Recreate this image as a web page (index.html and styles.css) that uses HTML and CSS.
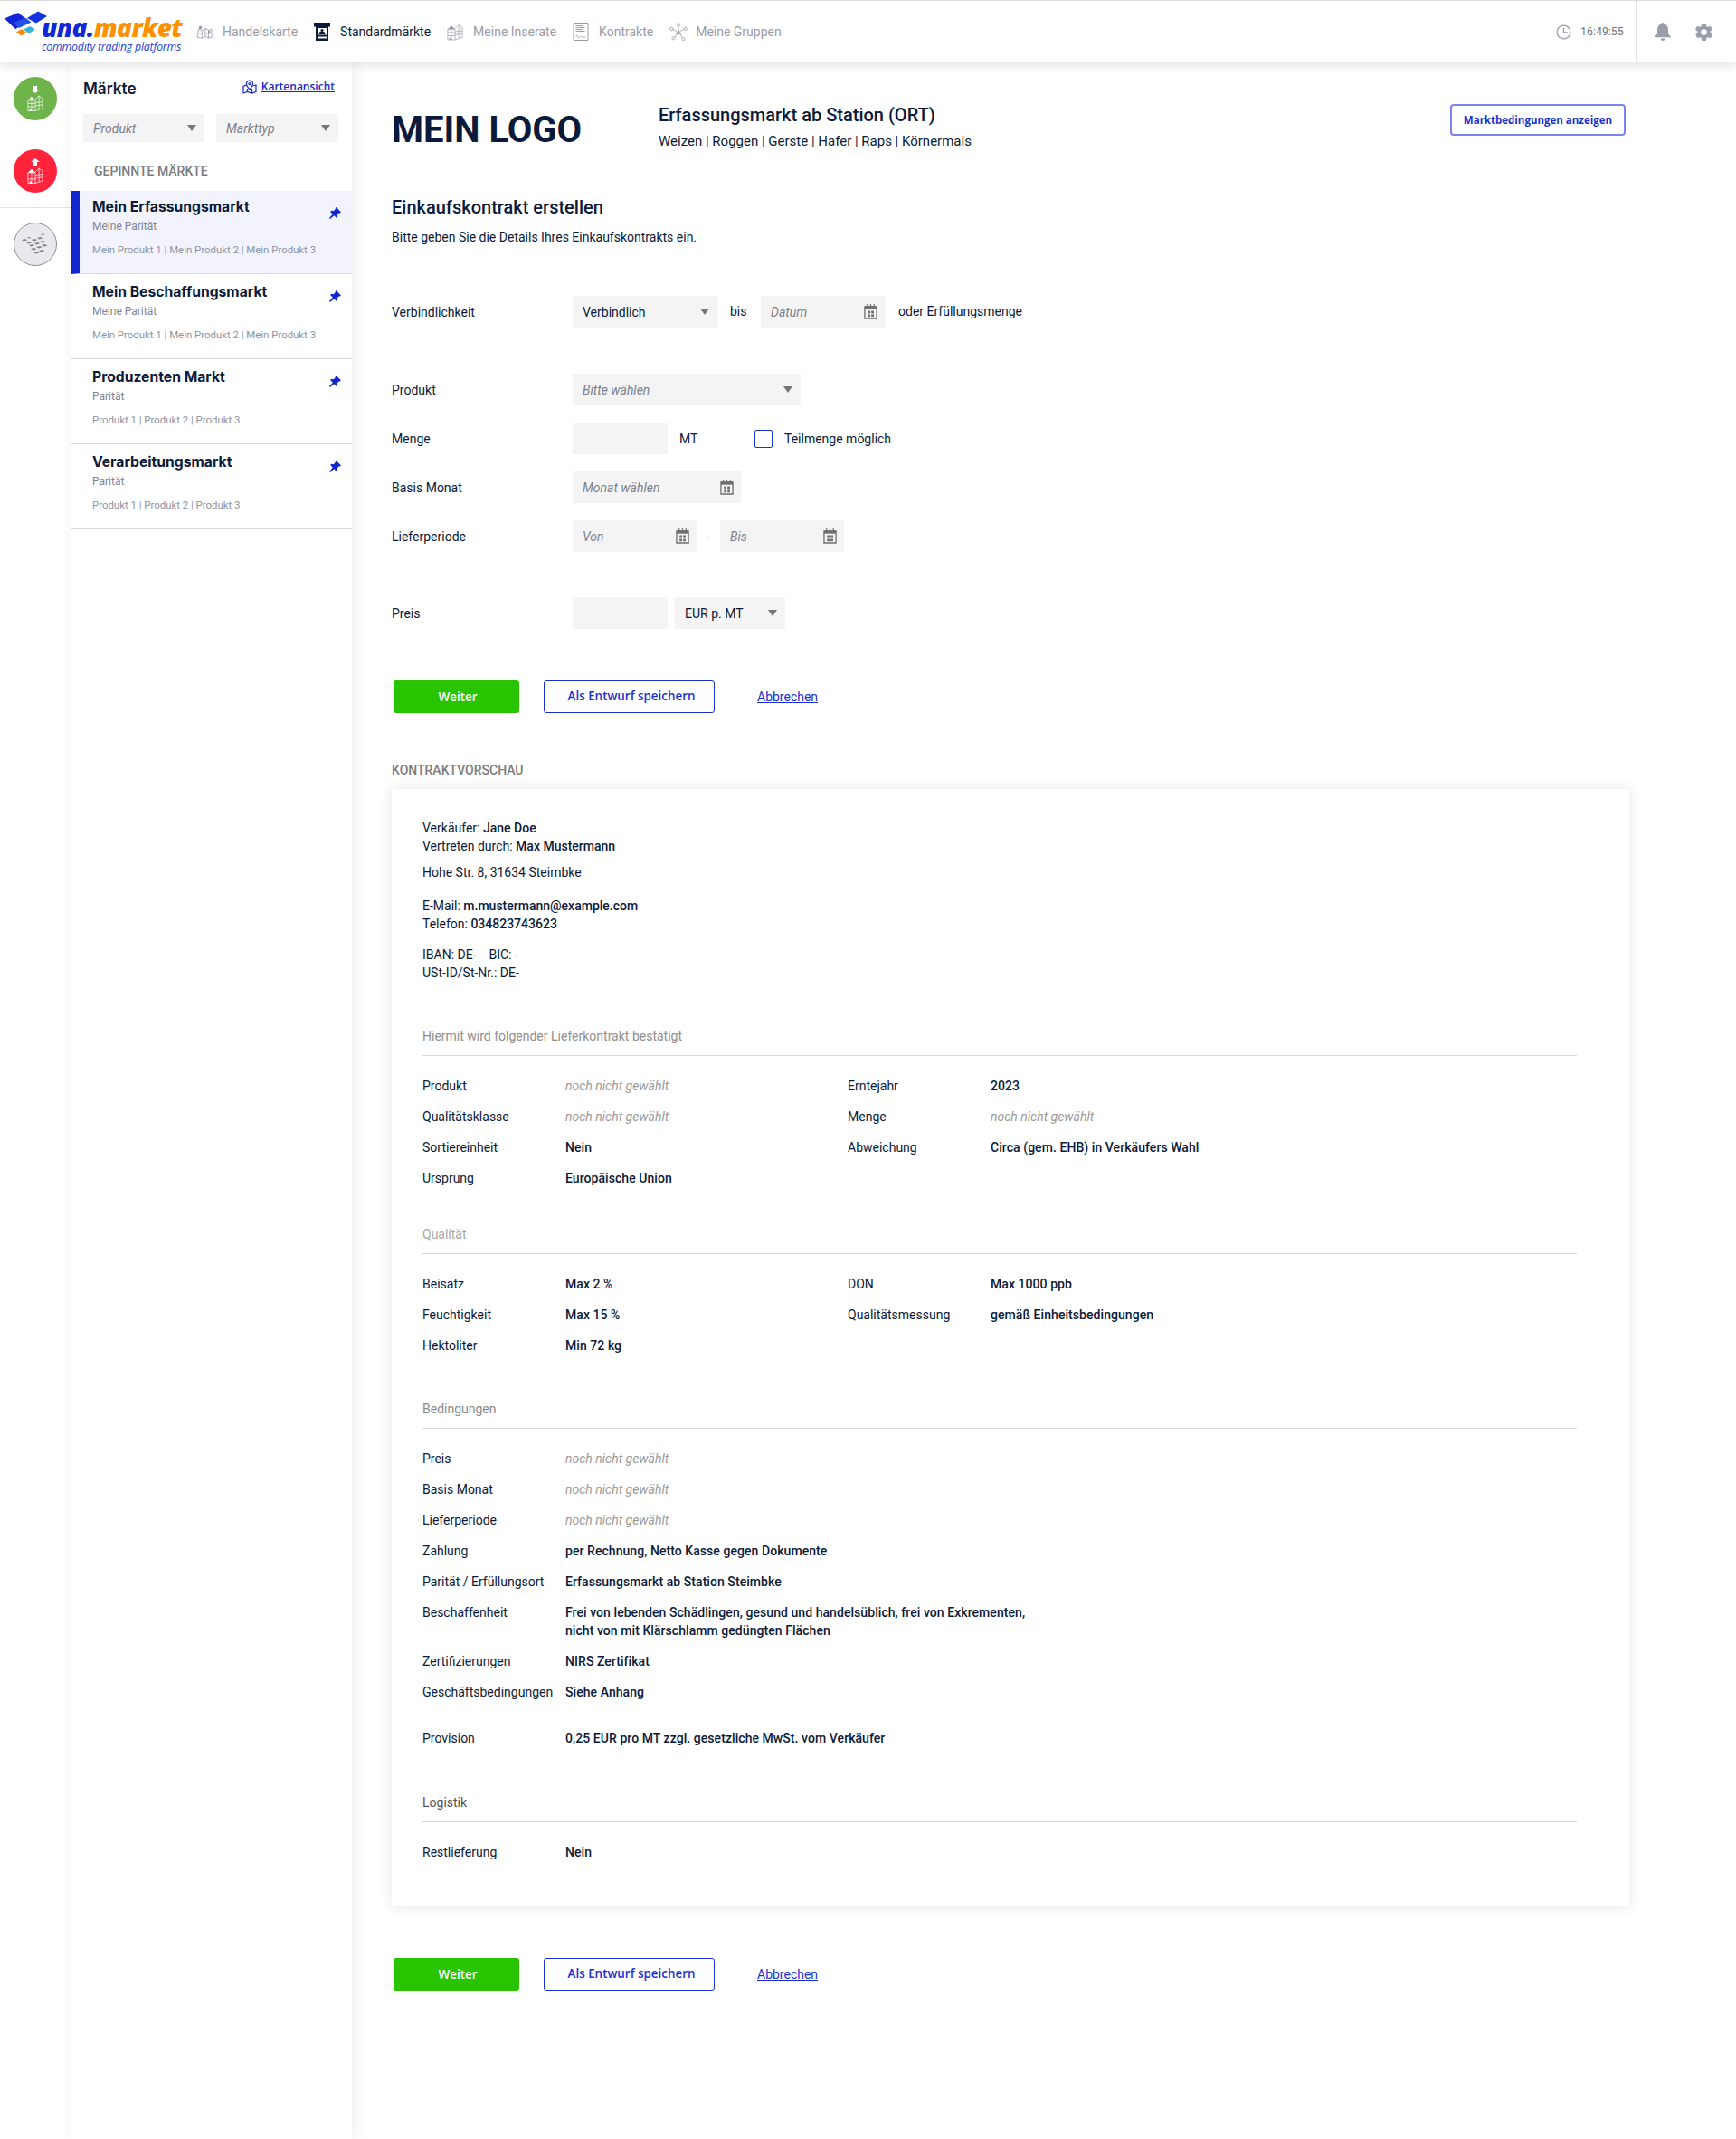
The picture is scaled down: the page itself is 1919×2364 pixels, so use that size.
FILE: index.html
```html
<!DOCTYPE html>
<html lang="de">
<head>
<meta charset="utf-8">
<title>una.market</title>
<link rel="stylesheet" href="styles.css">
</head>
<body>
<svg class="defs" width="0" height="0" aria-hidden="true">
  <symbol id="i-cal" viewBox="0 0 16 18">
    <path d="M1 3h14v14H1z" fill="none" stroke="currentColor" stroke-width="1.4"/>
    <path d="M1 2.5h14V6H1z" fill="currentColor"/>
    <path d="M4 0v3M8 0v3M12 0v3" stroke="currentColor" stroke-width="1.2"/>
    <path d="M4.5 8h3v3h-3zM8.7 8h3v3h-3zM4.5 12.2h3v3h-3zM8.7 12.2h3v3h-3z" fill="currentColor"/>
  </symbol>
  <symbol id="i-pin" viewBox="0 0 14 14">
    <path d="M8.200 0l5.800 5.800-1.200 1.100-1-.3-2.300 2.400.4 2.500-1.300 1.300-2.900-2.900L1 14l-1-1 4.100-4.700L1.200 5.400l1.300-1.300 2.500.4 2.400-2.300-.3-1z" fill="currentColor"/>
  </symbol>
  <symbol id="i-silo" viewBox="0 0 20 22">
    <g fill="none" stroke="currentColor" stroke-width=".8">
      <path d="M1 8h9v13H1zM10 7l4.500-4.500L19 6.500V18l-9 3"/>
      <path d="M1 12h9M1 16h9M5.500 8v13M10 11l9-1M10 15l9-1.500M14.500 3v16"/>
    </g>
    <path d="M1 8l4.500-4.500L10 8zM3 18.500h2.500V21H3z" fill="currentColor"/>
  </symbol>
</svg>

<header class="topbar">
  <a class="logo">
    <svg class="logo-mark" viewBox="0 0 54 40" aria-hidden="true">
      <path d="M5 19.500 20 13l12 9.500L17 31z" fill="#1226d8"/>
      <path d="M15 24l13-5.500 6.500 5L21 30z" fill="#2450ee"/>
      <path d="M30 19l12-7.500 10 5.500-12 7.500z" fill="#1433e0"/>
      <path d="M18 34.500l6-3.500 5.500 4-6 3.500z" fill="#f58a0a"/>
      <path d="M26 31.500l7-3.500 6 3.500-7 4.500z" fill="#35b4d6"/>
    </svg>
    <span class="logo-text">
      <span class="logo-name"><span class="logo-una">una.</span><span class="logo-market">market</span></span>
      <span class="logo-tag">commodity trading platforms</span>
    </span>
  </a>
  <nav class="nav">
    <a class="nav-item">
      <svg class="nav-icon" viewBox="0 0 20 18" aria-hidden="true"><g fill="none" stroke="currentColor" stroke-width=".9"><path d="M1 16l2-10 4 1.500L11 5l4 2 4-1 0 10-4 1-4-2-4 2zM7 7.500l0 9M11 5v10M15 7v10M2 11h16"/></g><circle cx="5" cy="4" r="2" fill="currentColor"/><circle cx="16" cy="9" r="1.500" fill="currentColor"/></svg>
      Handelskarte
    </a>
    <a class="nav-item nav-item--active">
      <svg class="nav-icon" viewBox="0 0 18 20" aria-hidden="true"><path d="M0 0h18v4.500H0z" fill="currentColor"/><path d="M2 4h14v16H2z" fill="currentColor"/><path d="M4 6h10v7.500H4z" fill="#fff"/><path d="M5.500 13l1-3h5l1 3z" fill="currentColor"/><circle cx="9" cy="8.500" r="1.600" fill="currentColor"/><path d="M4 15.500h10v2H4z" fill="#fff"/></svg>
      Standardmärkte
    </a>
    <a class="nav-item">
      <svg class="nav-icon" viewBox="0 0 20 22" aria-hidden="true"><use href="#i-silo"/></svg>
      Meine Inserate
    </a>
    <a class="nav-item">
      <svg class="nav-icon" viewBox="0 0 17 20" aria-hidden="true"><g fill="none" stroke="currentColor"><path d="M.5.500h16v19H.5z"/><path d="M3 3.500h8M3 5.500h10M3 7.500h7M3 9.500h10M3 11.500h6" stroke-width="1.200"/><path d="M3 16c1-2 2-2 2.500 0s1.500 0 2.500-.5 1 .5 2 .5h4" stroke-width=".8"/></g></svg>
      Kontrakte
    </a>
    <a class="nav-item nav-item--wide">
      <svg class="nav-icon nav-icon--net" viewBox="0 0 22 22" aria-hidden="true"><g fill="none" stroke="currentColor" stroke-width=".9"><path d="M11 4v5M4 8l5 2.500M18 8l-5 2.500M6 18l3.500-4M16 19l-3-5"/><circle cx="11" cy="2.500" r="1.800"/><circle cx="2.500" cy="7.500" r="1.800"/><circle cx="19.500" cy="7.500" r="1.800"/><circle cx="5" cy="19" r="1.800"/><circle cx="17" cy="20" r="1.800"/></g><path d="M11 8.500l3.500 5.500h-7z" fill="currentColor"/></svg>
      Meine Gruppen
    </a>
  </nav>
  <div class="clock">
    <svg class="clock-icon" viewBox="0 0 18 18" aria-hidden="true"><circle cx="9" cy="9" r="7.800" fill="none" stroke="currentColor" stroke-width="1.400"/><path d="M9 4v5.500h4.500" fill="none" stroke="currentColor" stroke-width="1.400"/></svg>
    <span>16:49:55</span>
  </div>
  <div class="tools">
    <svg class="bell" viewBox="0 0 18 20" aria-hidden="true"><path d="M9 0a1.500 1.500 0 0 1 1.500 1.600C13.500 2.300 15 4.800 15 8v4.500l3 3v.8H0v-.8l3-3V8c0-3.200 1.500-5.700 4.500-6.400A1.500 1.500 0 0 1 9 0zM6.800 17.500h4.400A2.200 2.200 0 0 1 9 20a2.200 2.200 0 0 1-2.200-2.500z" fill="currentColor"/></svg>
    <svg class="gear" viewBox="0 0 24 24" aria-hidden="true"><path d="M19.400 13c.1-.3.100-.7.100-1s0-.7-.1-1l2.100-1.600c.2-.2.200-.4.100-.6l-2-3.500c-.1-.2-.4-.3-.6-.2l-2.500 1c-.5-.4-1.100-.7-1.700-1l-.4-2.600c0-.3-.2-.5-.5-.5h-4c-.3 0-.5.200-.5.500l-.4 2.600c-.6.300-1.200.6-1.700 1l-2.500-1c-.2-.1-.5 0-.6.200l-2 3.500c-.1.200-.1.500.1.600L4.600 11c0 .3-.1.700-.1 1s0 .7.100 1l-2.100 1.600c-.2.200-.2.400-.1.600l2 3.500c.1.200.4.300.6.200l2.500-1c.5.400 1.100.7 1.700 1l.4 2.600c0 .3.200.5.500.5h4c.3 0 .5-.2.500-.5l.4-2.600c.6-.3 1.200-.6 1.700-1l2.500 1c.2.100.5 0 .6-.2l2-3.500c.1-.2.100-.5-.1-.6zM12 15.500a3.500 3.500 0 1 1 0-7 3.500 3.500 0 0 1 0 7z" fill="currentColor"/></svg>
  </div>
</header>

<div class="layout">
  <aside class="rail">
    <a class="rail-btn rail-btn--buy">
      <svg class="rail-arrow" viewBox="0 0 10 8" aria-hidden="true"><path d="M3 0h4v4h3L5 8 0 4h3z" fill="currentColor"/></svg>
      <svg class="rail-silo" viewBox="0 0 20 22" aria-hidden="true"><use href="#i-silo"/></svg>
    </a>
    <a class="rail-btn rail-btn--sell">
      <svg class="rail-arrow" viewBox="0 0 10 8" aria-hidden="true"><path d="M3 8h4V4h3L5 0 0 4h3z" fill="currentColor"/></svg>
      <svg class="rail-silo" viewBox="0 0 20 22" aria-hidden="true"><use href="#i-silo"/></svg>
    </a>
    <div class="rail-sep"></div>
    <a class="rail-btn rail-btn--map">
      <svg class="rail-grid" viewBox="0 0 32 24" aria-hidden="true"><g fill="currentColor"><path d="M1 7l4-1 2 1.500-4 1zM7 4.500l3-.5 1.500 1-3 .6zM22 1l3-.8 1.500 1-3 .8zM6 10l4-1 2 1.500-4 1zM12 7l4-1 2 1.500-4 1zM18 5l4-1 2 1.500-4 1zM9 13l4-1 2 1.500-4 1zM15 11l4-1 2 1.500-4 1zM21 9l4-1 2 1.500-4 1zM11 17l4-1 2.500 1.500-4 1zM17 15l4-1 2.500 1.500-4 1zM23 13l4-1 2.500 1.500-4 1zM14 21l4-1 2.500 1.500-4 1zM20 19l4-1 2 1.500-4 1z"/></g></svg>
    </a>
  </aside>

  <aside class="sidebar">
    <div class="side-head">
      <h2 class="side-title">Märkte</h2>
      <a class="map-link">
        <svg class="map-icon" viewBox="0 0 16 16" aria-hidden="true"><g fill="none" stroke="currentColor" stroke-width="1.200"><path d="M8 1a3.600 3.600 0 0 1 3.600 3.600C11.600 7 8 11 8 11S4.400 7 4.400 4.600A3.600 3.600 0 0 1 8 1z"/><circle cx="8" cy="4.600" r="1.100"/><path d="M4.500 6L1 7.500V15l4.500-1.500L10.500 15 15 13.500V6l-3.500 1M5.500 10v3.500M10.500 10v5"/></g></svg>
        <span>Kartenansicht</span>
      </a>
    </div>
    <div class="side-filters">
      <div class="field field--side"><span class="ph">Produkt</span><i class="caret"></i></div>
      <div class="field field--side"><span class="ph">Markttyp</span><i class="caret"></i></div>
    </div>
    <div class="side-label">GEPINNTE MÄRKTE</div>
    <ul class="market-list">
      <li class="market market--active">
        <h3>Mein Erfassungsmarkt</h3><p class="m-sub">Meine Parität</p><p class="m-prod">Mein Produkt 1 | Mein Produkt 2 | Mein Produkt 3</p>
        <svg class="pin" aria-hidden="true"><use href="#i-pin"/></svg>
      </li>
      <li class="market">
        <h3>Mein Beschaffungsmarkt</h3><p class="m-sub">Meine Parität</p><p class="m-prod">Mein Produkt 1 | Mein Produkt 2 | Mein Produkt 3</p>
        <svg class="pin" aria-hidden="true"><use href="#i-pin"/></svg>
      </li>
      <li class="market">
        <h3>Produzenten Markt</h3><p class="m-sub">Parität</p><p class="m-prod">Produkt 1 | Produkt 2 | Produkt 3</p>
        <svg class="pin" aria-hidden="true"><use href="#i-pin"/></svg>
      </li>
      <li class="market">
        <h3>Verarbeitungsmarkt</h3><p class="m-sub">Parität</p><p class="m-prod">Produkt 1 | Produkt 2 | Produkt 3</p>
        <svg class="pin" aria-hidden="true"><use href="#i-pin"/></svg>
      </li>
    </ul>
  </aside>

  <main class="main">
    <section class="brand">
      <div class="brand-logo">MEIN LOGO</div>
      <div class="brand-info">
        <h1>Erfassungsmarkt ab Station (ORT)</h1>
        <p>Weizen | Roggen | Gerste | Hafer | Raps | Körnermais</p>
      </div>
      <a class="terms-btn">Marktbedingungen anzeigen</a>
    </section>

    <h2 class="page-title">Einkaufskontrakt erstellen</h2>
    <p class="page-intro">Bitte geben Sie die Details Ihres Einkaufskontrakts ein.</p>

    <form class="form">
      <div class="form-row form-row--first">
        <label>Verbindlichkeit</label>
        <div class="field field--160"><span>Verbindlich</span><i class="caret"></i></div>
        <span class="bis">bis</span>
        <div class="field field--137"><span class="ph">Datum</span><svg class="cal" aria-hidden="true"><use href="#i-cal"/></svg></div>
        <span class="oder">oder Erfüllungsmenge</span>
      </div>
      <div class="form-row form-row--gap">
        <label>Produkt</label>
        <div class="field field--252"><span class="ph">Bitte wählen</span><i class="caret"></i></div>
      </div>
      <div class="form-row">
        <label>Menge</label>
        <div class="field field--105"></div>
        <span class="unit">MT</span>
        <span class="check"></span>
        <span class="check-label">Teilmenge möglich</span>
      </div>
      <div class="form-row">
        <label>Basis Monat</label>
        <div class="field field--186"><span class="ph">Monat wählen</span><svg class="cal" aria-hidden="true"><use href="#i-cal"/></svg></div>
      </div>
      <div class="form-row">
        <label>Lieferperiode</label>
        <div class="field field--137"><span class="ph">Von</span><svg class="cal" aria-hidden="true"><use href="#i-cal"/></svg></div>
        <span class="dash">-</span>
        <div class="field field--137"><span class="ph">Bis</span><svg class="cal" aria-hidden="true"><use href="#i-cal"/></svg></div>
      </div>
      <div class="form-row form-row--gap2">
        <label>Preis</label>
        <div class="field field--105"></div>
        <div class="field field--122"><span>EUR p. MT</span><i class="caret"></i></div>
      </div>
    </form>

    <div class="actions">
      <a class="btn btn--go">Weiter</a>
      <a class="btn btn--draft">Als Entwurf speichern</a>
      <a class="cancel">Abbrechen</a>
    </div>

    <div class="preview-label">KONTRAKTVORSCHAU</div>
    <article class="card">
      <p>Verkäufer: <b>Jane Doe</b><br>Vertreten durch: <b>Max Mustermann</b></p>
      <p class="addr">Hohe Str. 8, 31634 Steimbke</p>
      <p class="mail">E-Mail: <b>m.mustermann@example.com</b><br>Telefon: <b>034823743623</b></p>
      <p class="bank">IBAN: DE-&nbsp;&nbsp;&nbsp;&nbsp;BIC: -<br>USt-ID/St-Nr.: DE-</p>

      <h4 class="sec sec--1">Hiermit wird folgender Lieferkontrakt bestätigt</h4>
      <div class="grid grid--4">
        <span>Produkt</span><em>noch nicht gewählt</em><span>Erntejahr</span><b>2023</b>
        <span>Qualitätsklasse</span><em>noch nicht gewählt</em><span>Menge</span><em>noch nicht gewählt</em>
        <span>Sortiereinheit</span><b>Nein</b><span>Abweichung</span><b>Circa (gem. EHB) in Verkäufers Wahl</b>
        <span>Ursprung</span><b>Europäische Union</b>
      </div>

      <h4 class="sec sec--2">Qualität</h4>
      <div class="grid grid--4">
        <span>Beisatz</span><b>Max 2 %</b><span>DON</span><b>Max 1000 ppb</b>
        <span>Feuchtigkeit</span><b>Max 15 %</b><span>Qualitätsmessung</span><b>gemäß Einheitsbedingungen</b>
        <span>Hektoliter</span><b>Min 72 kg</b>
      </div>

      <h4 class="sec sec--3">Bedingungen</h4>
      <div class="grid grid--2">
        <span>Preis</span><em>noch nicht gewählt</em>
        <span>Basis Monat</span><em>noch nicht gewählt</em>
        <span>Lieferperiode</span><em>noch nicht gewählt</em>
        <span>Zahlung</span><b>per Rechnung, Netto Kasse gegen Dokumente</b>
        <span>Parität / Erfüllungsort</span><b>Erfassungsmarkt ab Station Steimbke</b>
        <span>Beschaffenheit</span><b>Frei von lebenden Schädlingen, gesund und handelsüblich, frei von Exkrementen,<br>nicht von mit Klärschlamm gedüngten Flächen</b>
        <span>Zertifizierungen</span><b>NIRS Zertifikat</b>
        <span>Geschäftsbedingungen</span><b>Siehe Anhang</b>
      </div>
      <div class="grid grid--2 grid--prov">
        <span>Provision</span><b>0,25 EUR pro MT zzgl. gesetzliche MwSt. vom Verkäufer</b>
      </div>

      <h4 class="sec sec--4">Logistik</h4>
      <div class="grid grid--2">
        <span>Restlieferung</span><b>Nein</b>
      </div>
    </article>

    <div class="actions actions--bottom">
      <a class="btn btn--go">Weiter</a>
      <a class="btn btn--draft">Als Entwurf speichern</a>
      <a class="cancel">Abbrechen</a>
    </div>
  </main>
</div>
</body>
</html>
```

FILE: styles.css
```css
* { box-sizing: border-box; }
html, body { margin: 0; padding: 0; }
body {
  width: 1919px;
  min-height: 2364px;
  background: #fff;
  color: #0b1a3a;
  font-family: Roboto, "Liberation Sans", sans-serif;
  font-size: 14px;
  line-height: 20px;
  display: flex;
  flex-direction: column;
}
p, h1, h2, h3, h4, ul { margin: 0; padding: 0; }
ul { list-style: none; }
.defs { position: absolute; }

/* top bar */
.topbar {
  height: 69px;
  flex: none;
  display: flex;
  align-items: center;
  border-top: 1px solid #dcdcdc;
  box-shadow: 0 2px 12px rgba(30, 40, 60, .16);
  background: #fff;
  position: relative;
  z-index: 3;
}
.logo { display: flex; width: 217px; height: 68px; flex: none; position: relative; }
.logo-mark { width: 54px; height: 40px; flex: none; }
.logo-text { display: flex; flex-direction: column; margin-left: -8px; padding-top: 16px; font-family: "Open Sans", sans-serif; font-style: italic; }
.logo-name { font-size: 28px; line-height: 27px; font-weight: 800; letter-spacing: -.65px; white-space: nowrap; }
.logo-una { color: #1228d4; }
.logo-market { color: #ff9100; }
.logo-tag { font-size: 12.2px; line-height: 15px; color: #1c3ddb; white-space: nowrap; letter-spacing: -.15px; }

.nav { display: flex; align-items: center; gap: 18px; }
.nav-item { display: flex; align-items: center; gap: 11px; color: #9a9ca8; font-size: 14px; white-space: nowrap; }
.nav-item--active { color: #0b1a3a; }
.nav-icon { width: 18px; height: 20px; flex: none; }
.nav-icon--net { width: 20px; margin: 0 -2px 0 0; }

.clock { margin-left: auto; display: flex; align-items: center; gap: 10px; color: #6f7380; font-size: 12.4px; width: 89px; height: 68px; }
.clock-icon { width: 17px; height: 17px; color: #9a9eab; flex: none; }
.tools { height: 68px; border-left: 1px solid #e2e2e2; width: 110px; display: flex; align-items: center; color: #9a9eab; padding-left: 19px; }
.bell { width: 18px; height: 20px; }
.gear { width: 23px; height: 23px; margin-left: 25px; }

/* layout */
.layout { display: flex; flex: 1; }
.rail { width: 79px; flex: none; padding: 16px 1px 0 0; display: flex; flex-direction: column; align-items: center; }
.rail-btn {
  width: 48px; height: 48px; border-radius: 50%;
  display: flex; flex-direction: column; align-items: center; justify-content: center;
  color: #fff;
}
.rail-btn--buy { background: #6fb34b; }
.rail-btn--sell { background: #ff233c; margin-top: 32px; }
.rail-btn--map { background: #e9e9ed; border: 1.5px solid #8d8f9e; color: #80838f; }
.rail-arrow { width: 10px; height: 8px; }
.rail-silo { width: 18px; height: 21px; }
.rail-grid { width: 32px; height: 24px; }
.rail-sep { width: 79px; height: 1px; background: #e2e2e2; margin: 16px 0 16px 1px; }

.sidebar { width: 310px; flex: none; background: #fff; box-shadow: 2px 0 16px rgba(30, 40, 60, .09); position: relative; z-index: 1; }
.side-head { display: flex; justify-content: space-between; padding: 15px 19px 0 13px; height: 57px; }
.side-title { font: 600 17.2px/28px Inter, sans-serif; color: #0b1a3a; }
.map-link { display: flex; gap: 5px; color: #1428d0; font: 600 12px/20px "Open Sans", sans-serif; height: 20px; margin-top: 2px; }
.map-link span { text-decoration: underline; }
.map-icon { width: 16px; height: 16px; margin-top: 2px; }
.side-filters { display: flex; gap: 13px; padding-left: 13px; }
.side-label { font-weight: 500; font-size: 14px; color: #7c7c7c; line-height: 20px; padding: 22px 0 0 25px; height: 54px; }

.market { position: relative; height: 94px; padding: 7px 0 0 23px; border-bottom: 1px solid #d8d8dc; }
.market--active { height: 92px; background: #f2f3fd; border-left: 9px solid #1226d0; padding: 5px 0 0 14px; }
.market h3 { font: 700 15.7px/26px Inter, sans-serif; color: #0b1a3a; white-space: nowrap; }
.m-sub { font-size: 12px; line-height: 18px; color: #7f8494; margin-top: -1px; }
.m-prod { font-size: 11.4px; line-height: 18px; color: #8f93a2; margin-top: 8px; }
.pin { position: absolute; right: 12px; top: 18px; width: 13px; height: 13px; color: #1226d0; }

/* main */
.main { flex: 1; padding-left: 44px; }
.brand { display: flex; height: 76px; margin-top: 36px; width: 1364px; }
.brand-logo { font-size: 40px; font-weight: 700; line-height: 78px; width: 295px; white-space: nowrap; }
.brand-info { padding-top: 10px; flex: 1; }
.brand-info h1 { font-size: 20px; font-weight: 500; line-height: 24px; }
.brand-info p { font-size: 15px; line-height: 22px; margin-top: 6px; }
.terms-btn {
  width: 194px; height: 35px; margin-top: 10px;
  border: 2px solid #7a85ea; border-radius: 4px;
  color: #1a2fd8; font: 700 11.5px/31px "Open Sans", sans-serif; text-align: center; white-space: nowrap;
}
.page-title { font-size: 20px; font-weight: 500; line-height: 24px; margin-top: 36px; }
.page-intro { font-size: 14px; line-height: 20px; margin-top: 11px; }

.form { margin-top: 55px; }
.form-row { display: flex; align-items: center; height: 35px; margin-bottom: 19px; }
.form-row--first { margin-bottom: 51px; }
.form-row--gap2 { margin-top: 50px; margin-bottom: 0; }
.form-row label { width: 200px; flex: none; }
.field {
  height: 35px; background: #f4f4f4; display: flex; align-items: center; justify-content: space-between;
  padding: 0 8px 0 11px; flex: none;
}
.field--160 { width: 160px; }
.field--137 { width: 137px; padding-right: 8px; }
.field--252 { width: 252px; }
.field--105 { width: 105px; }
.field--186 { width: 186px; }
.field--122 { width: 122px; margin-left: 8px; }
.field--side { width: 134px; height: 31px; }
.side-filters .field--side:last-child { width: 135px; }
.ph { color: #7c808c; font-style: italic; }
.caret { width: 0; height: 0; border-left: 5px solid transparent; border-right: 5px solid transparent; border-top: 7.500px solid #777; margin-right: 1px; }
.cal { width: 15px; height: 17px; color: #6f6f6f; }
.bis { width: 48px; padding: 0 0 2px 14px; flex: none; }
.oder { margin-left: 15px; padding-bottom: 2px; }
.unit { margin-left: 13px; width: 83px; flex: none; }
.check { width: 20px; height: 20px; border: 1.5px solid #1a2fd8; border-radius: 2px; flex: none; }
.check-label { margin-left: 13px; }
.dash { width: 26px; text-align: center; flex: none; }

.actions { display: flex; align-items: center; margin-top: 57px; padding-left: 2px; }
.actions--bottom { margin-top: 57px; }
.btn { height: 36px; border-radius: 3px; font: 600 13.4px/36px "Open Sans", sans-serif; text-align: center; white-space: nowrap; }
.btn--go { width: 139px; background: #28c400; color: #fff; padding-left: 3px; }
.btn--draft { width: 189px; margin-left: 27px; border: 1.5px solid #1a2fd8; color: #1a2fd8; line-height: 33px; padding-left: 5px; }
.cancel { margin-left: 47px; color: #1a2fd8; text-decoration: underline; }

.preview-label { font-weight: 500; color: #7c7c7c; margin-top: 53px; }
.card {
  width: 1368px; margin-top: 11px; padding: 33px 58px 50px 34px; background: #fff;
  box-shadow: 0 0 14px rgba(30, 40, 60, .12);
}
.card b { font-weight: 500; }
.addr { margin-top: 9px; }
.mail { margin-top: 17px; }
.bank { margin-top: 14px; }
.sec { font-weight: 400; font-size: 14px; line-height: 20px; color: #8f8f8f; border-bottom: 1px solid #d9d9d9; height: 32px; margin-bottom: 23px; }
.sec--1 { margin-top: 50px; }
.sec--2 { margin-top: 42px; color: #a8a8a8; }
.sec--3 { margin-top: 50px; color: #8a8a8a; }
.sec--4 { margin-top: 51px; color: #555; }
.grid { display: grid; row-gap: 14px; }
.grid--4 { grid-template-columns: 158px 312px 158px 1fr; }
.grid--2 { grid-template-columns: 158px 1fr; }
.grid--prov { margin-top: 31px; }
.grid em { color: #9a9a9a; }
.grid span { white-space: nowrap; }
.grid b { letter-spacing: .06px; }
```
